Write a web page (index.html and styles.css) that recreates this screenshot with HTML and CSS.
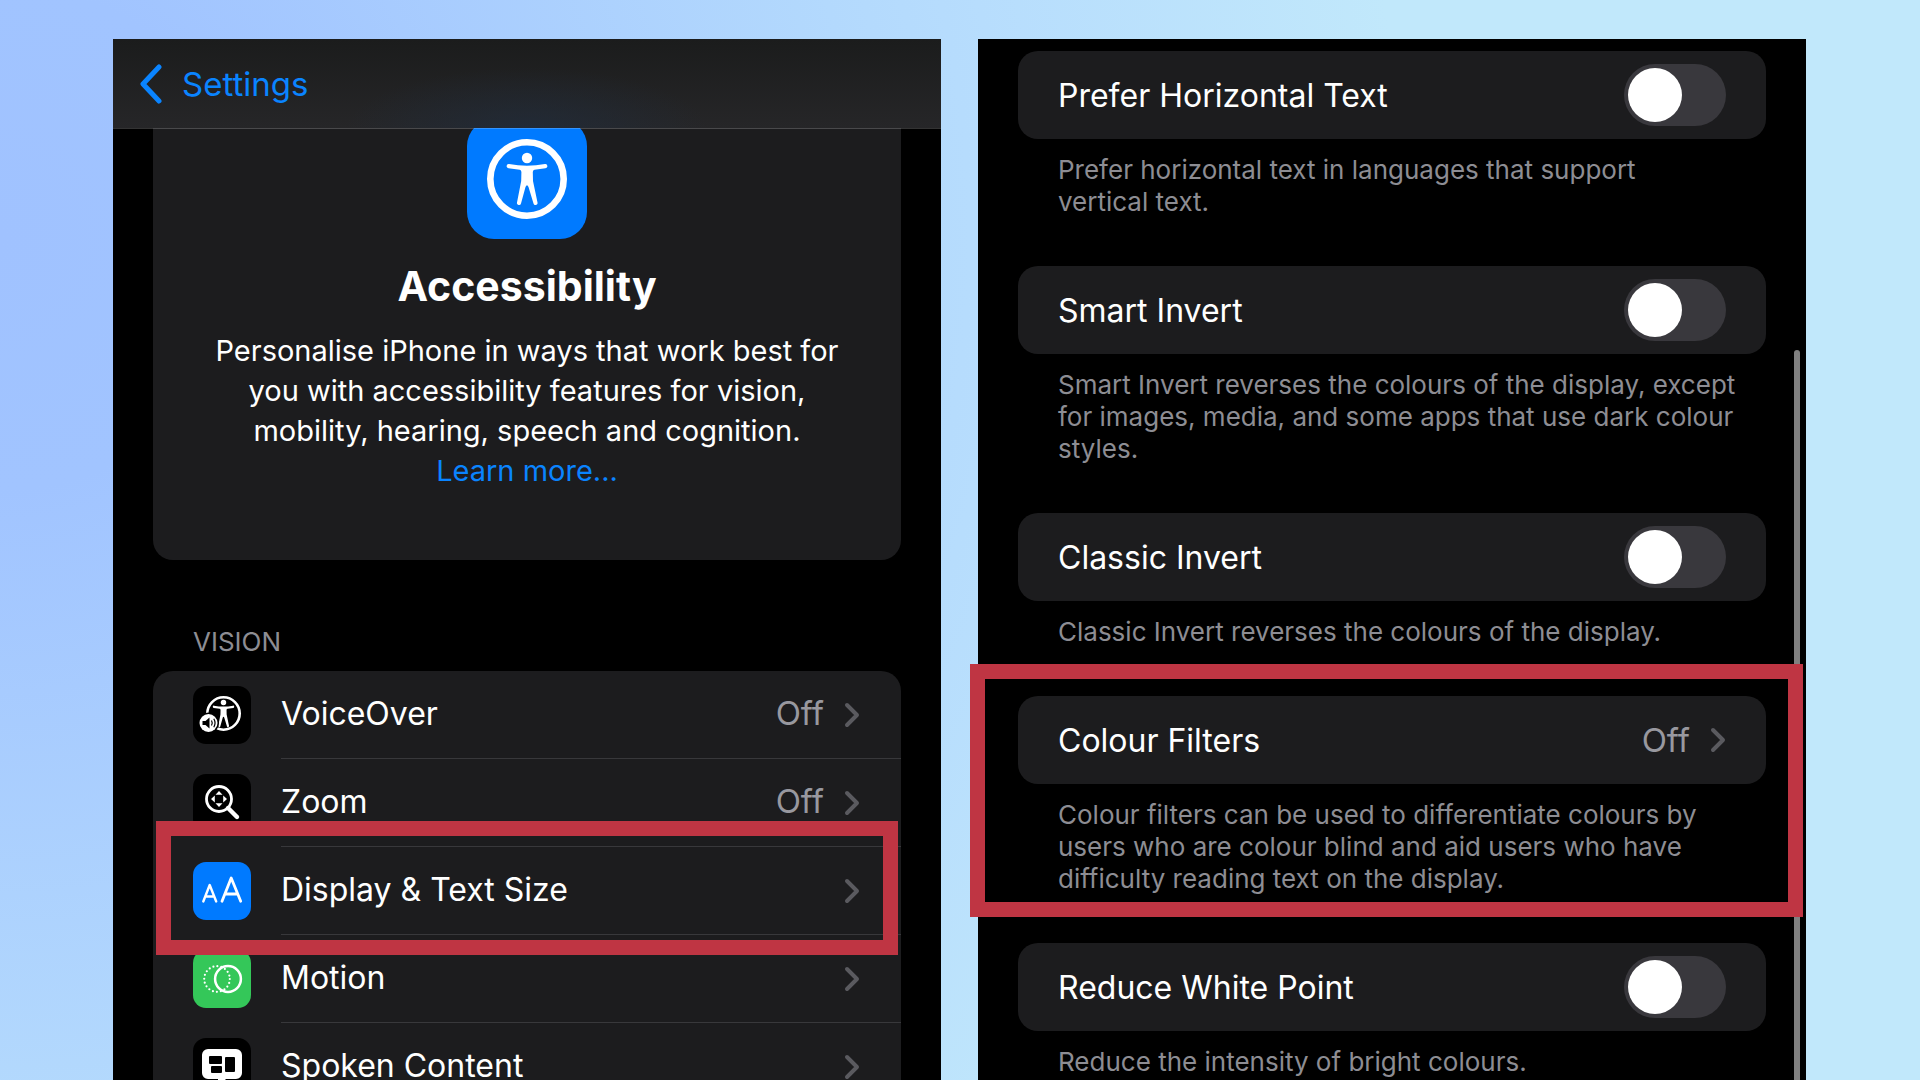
FILE: index.html
```html
<!DOCTYPE html>
<html lang="en-GB">
<head>
<meta charset="utf-8">
<meta name="viewport" content="width=device-width, initial-scale=1">
<title>Accessibility settings</title>
<link rel="stylesheet" href="styles.css">
</head>
<body>
<svg class="defs" aria-hidden="true">
  <symbol id="chevron" viewBox="0 0 16 26"><path d="M3 3 L13 13 L3 23" fill="none" stroke="currentColor" stroke-width="4" stroke-linecap="round" stroke-linejoin="round"/></symbol>
  <symbol id="person" viewBox="0 0 80 80">
    <circle cx="40" cy="19" r="5.2"/>
    <path d="M22 25 Q40 28.500 58 25 A2 2 0 0 1 58.500 29.300 L47.500 30.800 Q45.800 31.200 45.800 33 L46 42 L50.500 63.500 A2 2 0 0 1 46.500 64.500 L41.500 48 Q40 44.500 38.500 48 L34 64.500 A2 2 0 0 1 30 63.500 L34.200 42 L34.400 33 Q34.400 31.200 32.700 30.800 L21.500 29.300 A2 2 0 0 1 22 25 Z"/>
  </symbol>
</svg>
<main class="stage">
  <section class="phone">
    <header class="navbar">
      <a class="back" href="#"><svg class="back-icon" viewBox="0 0 24 40" aria-hidden="true"><path d="M20 3 L4 20 L20 37" fill="none" stroke="currentColor" stroke-width="5" stroke-linecap="round" stroke-linejoin="round"/></svg>Settings</a>
    </header>
    <div class="content">
      <div class="hero">
        <svg class="hero-icon" viewBox="0 0 120 120" aria-hidden="true">
          <rect width="120" height="120" rx="27" fill="#007aff"/>
          <circle cx="60" cy="60" r="36.700" fill="none" stroke="#fff" stroke-width="6.600"/>
          <use href="#person" x="20" y="20" width="80" height="80" fill="#fff"/>
        </svg>
        <h1 class="hero-title">Accessibility</h1>
        <p class="hero-text">Personalise iPhone in ways that work best for<br>you with accessibility features for vision,<br>mobility, hearing, speech and cognition.<br><a class="link" href="#">Learn more...</a></p>
      </div>
      <h2 class="section-title">VISION</h2>
      <ul class="list">
        <li class="item">
          <svg class="app-icon" viewBox="0 0 58 58" aria-hidden="true">
            <rect width="58" height="58" rx="13"/>
            <circle cx="30.500" cy="27.500" r="16.200" fill="none" stroke="#fff" stroke-width="2.600"/>
            <use href="#person" x="9.500" y="6.500" width="42" height="42" fill="#fff"/>
            <circle cx="15.500" cy="37" r="10.500"/>
            <circle cx="15.500" cy="37" r="9" fill="#fff"/>
            <path d="M9.500 35 h3 l4 -3.500 v11 l-4 -3.500 h-3 z"/>
            <path d="M18.500 34.500 q1.500 2.500 0 5 M20.800 32.800 q2.500 4.200 0 8.400" fill="none" stroke="#000" stroke-width="1.200"/>
          </svg>
          <a class="item-body" href="#"><span class="label">VoiceOver</span><span class="value">Off</span><svg class="chevron" aria-hidden="true"><use href="#chevron"/></svg></a>
        </li>
        <li class="item">
          <svg class="app-icon" viewBox="0 0 58 58" aria-hidden="true">
            <rect width="58" height="58" rx="13"/>
            <circle cx="26" cy="25" r="12.500" fill="none" stroke="#fff" stroke-width="2.800"/>
            <path d="M35 34 L44 43" stroke="#fff" stroke-width="4.400" stroke-linecap="round"/>
            <path d="M26 17 l3.500 3.800 h-7 z M26 33 l3.500 -3.800 h-7 z M18 25 l3.800 -3.500 v7 z M34 25 l-3.800 -3.500 v7 z" fill="#fff"/>
          </svg>
          <a class="item-body" href="#"><span class="label">Zoom</span><span class="value">Off</span><svg class="chevron" aria-hidden="true"><use href="#chevron"/></svg></a>
        </li>
        <li class="item marked">
          <svg class="app-icon" viewBox="0 0 58 58" aria-hidden="true">
            <rect width="58" height="58" rx="13" fill="#007aff"/>
            <g fill="none" stroke="#fff" stroke-linecap="round" stroke-linejoin="round">
              <path d="M10.300 39.500 L16.700 23 L23.200 39.500 M12.500 34.500 h8.500" stroke-width="2.400"/>
              <path d="M29 39.300 L38.200 16 L47.700 39.300 M32 32 h12.500" stroke-width="2.800"/>
            </g>
          </svg>
          <a class="item-body" href="#"><span class="label">Display &amp; Text Size</span><svg class="chevron" aria-hidden="true"><use href="#chevron"/></svg></a>
        </li>
        <li class="item">
          <svg class="app-icon" viewBox="0 0 58 58" aria-hidden="true">
            <rect width="58" height="58" rx="13" fill="#34c759"/>
            <circle cx="24" cy="29" r="12.800" fill="none" stroke="#fff" stroke-width="2.200" stroke-linecap="round" stroke-dasharray="0 4.020"/>
            <circle cx="35" cy="29" r="12.900" fill="none" stroke="#fff" stroke-width="2.500"/>
          </svg>
          <a class="item-body" href="#"><span class="label">Motion</span><svg class="chevron" aria-hidden="true"><use href="#chevron"/></svg></a>
        </li>
        <li class="item">
          <svg class="app-icon" viewBox="0 0 58 58" aria-hidden="true">
            <rect width="58" height="58" rx="13"/>
            <path d="M15 11 h28 a6 6 0 0 1 6 6 v18 a6 6 0 0 1 -6 6 h-10 l-8 8 v-8 h-10 a6 6 0 0 1 -6 -6 v-18 a6 6 0 0 1 6 -6 z" fill="#fff"/>
            <rect x="16" y="18" width="13" height="8" rx="1"/><rect x="18" y="28" width="11" height="7" rx="1"/><rect x="32" y="19" width="10" height="15" rx="1"/>
          </svg>
          <a class="item-body" href="#"><span class="label">Spoken Content</span><svg class="chevron" aria-hidden="true"><use href="#chevron"/></svg></a>
        </li>
      </ul>
    </div>
  </section>

  <section class="phone options">
    <div class="group">
      <div class="card"><label class="label" for="horizontal">Prefer Horizontal Text</label><input class="switch" type="checkbox" role="switch" id="horizontal"></div>
      <p class="note">Prefer horizontal text in languages that support<br>vertical text.</p>
    </div>
    <div class="group">
      <div class="card"><label class="label" for="smart">Smart Invert</label><input class="switch" type="checkbox" role="switch" id="smart"></div>
      <p class="note">Smart Invert reverses the colours of the display, except<br>for images, media, and some apps that use dark colour<br>styles.</p>
    </div>
    <div class="group">
      <div class="card"><label class="label" for="classic">Classic Invert</label><input class="switch" type="checkbox" role="switch" id="classic"></div>
      <p class="note">Classic Invert reverses the colours of the display.</p>
    </div>
    <div class="group marked">
      <a class="card" href="#"><span class="label">Colour Filters</span><span class="value">Off</span><svg class="chevron" aria-hidden="true"><use href="#chevron"/></svg></a>
      <p class="note">Colour filters can be used to differentiate colours by<br>users who are colour blind and aid users who have<br>difficulty reading text on the display.</p>
    </div>
    <div class="group">
      <div class="card"><label class="label" for="white">Reduce White Point</label><input class="switch" type="checkbox" role="switch" id="white"></div>
      <p class="note">Reduce the intensity of bright colours.</p>
    </div>
    <div class="scrollbar"></div>
  </section>
</main>
</body>
</html>
```
FILE: styles.css
```css
* { box-sizing: border-box; margin: 0; padding: 0; }

body {
  height: 100vh;
  overflow: hidden;
  font-family: Inter, "Liberation Sans", sans-serif;
  font-size: 32px;
  color: #fff;
  background: radial-gradient(circle at 0% 22%, #a0c2ff 0%, #a1c4ff 12%, #b3d9fd 41%, #b7ddfd 48%, #c1e8fb 67%);
}

a { color: inherit; text-decoration: none; }
.defs { position: absolute; width: 0; height: 0; }

.stage {
  display: grid;
  grid-template-columns: minmax(0, 1fr) minmax(0, 1fr);
  gap: 37px;
  height: 100%;
  padding: 39px 114px 0 113px;
}
.phone {
  position: relative;
  background: #000;
}

.navbar {
  position: relative;
  z-index: 1;
  display: flex;
  align-items: center;
  height: 90px;
  margin-bottom: -1px;
  padding: 0 26px;
  background:
    radial-gradient(ellipse 180px 60px at 50% 100%, rgba(32, 44, 60, 0.7), transparent) padding-box,
    linear-gradient(#1b1c1c, #262628) padding-box;
  border-bottom: 1px solid rgba(255, 255, 255, 0.2);
}
.back {
  display: flex;
  align-items: center;
  gap: 19px;
  font-size: 33px;
  color: #0a84ff;
}
.back-icon { width: 24px; height: 40px; }

.content { padding: 0 40px; }
.hero {
  display: flex;
  flex-direction: column;
  align-items: center;
  padding-bottom: 69px;
  text-align: center;
  background: #1c1c1e;
  border-radius: 0 0 20px 20px;
}
.hero-icon { width: 120px; height: 120px; margin-top: -9px; }
.hero-title { margin-top: 20px; font-size: 41px; line-height: 54px; }
.hero-text { margin-top: 18px; font-size: 29px; line-height: 40px; white-space: nowrap; }
.link { color: #0a84ff; }

.section-title {
  padding: 66px 40px 13px;
  font-size: 26px;
  font-weight: 400;
  line-height: 32px;
  color: #8d8d93;
}
.list {
  list-style: none;
  background: #1c1c1e;
  border-radius: 20px 20px 0 0;
}
.item {
  position: relative;
  display: flex;
  align-items: center;
  gap: 30px;
  height: 88px;
  padding-left: 40px;
}
.app-icon { flex: none; width: 58px; height: 58px; }
.item-body {
  display: flex;
  flex: 1;
  align-items: center;
  height: 100%;
  padding-right: 41px;
  border-bottom: 1px solid #38383b;
}
.label { flex: 1; white-space: nowrap; }
.value { margin-right: 20px; font-size: 33px; color: #98989f; }
.item .label, .item .value { padding-bottom: 3px; }
.chevron { width: 16px; height: 26px; color: #5a5a5f; }

/* Callout frame drawn over the highlighted setting */
.marked::after {
  content: "";
  position: absolute;
  z-index: 1;
  inset: -26px 3px -20px 3px;
  border: 15px solid #bf3543;
  pointer-events: none;
}

.options {
  display: flex;
  flex-direction: column;
  gap: 48px;
  padding: 12px 40px 0;
}
.group { position: relative; }
.group.marked::after { inset: -32px -37px -22px -48px; }
.card {
  display: flex;
  align-items: center;
  height: 88px;
  padding: 0 40px;
  background: #1c1c1e;
  border-radius: 20px;
}
.note {
  padding: 15px 40px 0;
  font-size: 26px;
  line-height: 32px;
  color: #8d8d93;
  white-space: nowrap;
}

.switch {
  appearance: none;
  display: flex;
  width: 102px;
  height: 62px;
  padding: 4px;
  background: #39383d;
  border-radius: 31px;
}
.switch::before {
  content: "";
  width: 54px;
  height: 54px;
  background: #fff;
  border-radius: 50%;
}
.switch:checked { justify-content: flex-end; background: #34c759; }

.scrollbar {
  position: absolute;
  top: 311px;
  right: 6px;
  bottom: 0;
  width: 6px;
  background: #808080;
  border-radius: 3px 3px 0 0;
}
```
